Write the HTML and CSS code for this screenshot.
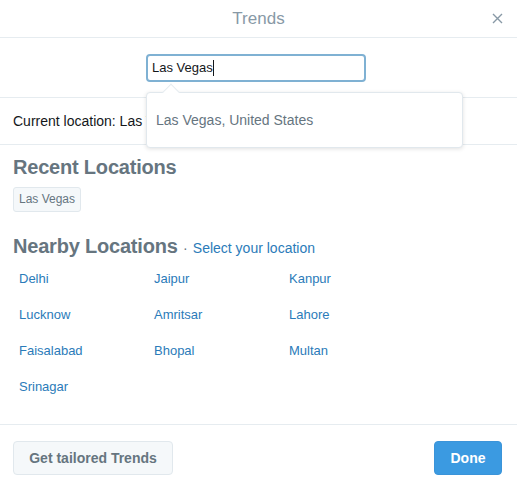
FILE: index.html
```html
<!DOCTYPE html>
<html>
<head>
<meta charset="utf-8">
<link rel="stylesheet" href="styles.css">
</head>
<body>
<div class="modal">
  <header class="header">
    <h1 class="title">Trends</h1>
    <button class="close" aria-label="Close">
      <svg width="11" height="11" viewBox="0 0 11 11"><path d="M1 1L10 10M10 1L1 10" stroke="#8899a6" stroke-width="1.4" fill="none"/></svg>
    </button>
  </header>
  <div class="search">
    <div class="search-wrap">
      <div class="input">Las Vegas<span class="cursor"></span></div>
      <div class="dropdown">
        <div class="caret"></div>
        <div class="option">Las Vegas, United States</div>
      </div>
    </div>
  </div>
  <div class="current">Current location: Las Vegas</div>
  <div class="content">
    <h2 class="section-title">Recent Locations</h2>
    <div class="chips"><span class="chip">Las Vegas</span></div>
    <h2 class="section-title nearby">Nearby Locations <span class="dot">·</span> <a class="select">Select your location</a></h2>
    <div class="grid">
      <a>Delhi</a><a>Jaipur</a><a>Kanpur</a>
      <a>Lucknow</a><a>Amritsar</a><a>Lahore</a>
      <a>Faisalabad</a><a>Bhopal</a><a>Multan</a>
      <a>Srinagar</a>
    </div>
  </div>
  <footer class="footer">
    <button class="btn btn-secondary">Get tailored Trends</button>
    <button class="btn btn-primary">Done</button>
  </footer>
</div>
</body>
</html>
```

FILE: styles.css
```css
* { box-sizing: border-box; }
html, body { margin: 0; padding: 0; background: #fff; }
body { font-family: "Liberation Sans", Arial, sans-serif; color: #14171a; }
.modal { width: 517px; height: 488px; display: flex; flex-direction: column; }
.header { height: 38px; border-bottom: 1px solid #e6ecf0; display: flex; align-items: center; justify-content: center; position: relative; }
.title { margin: 0; font-size: 17px; font-weight: normal; color: #8899a6; }
.close { position: absolute; right: 14px; top: 13px; border: 0; background: none; padding: 0; width: 11px; height: 11px; display: flex; }
.search { height: 60px; border-bottom: 1px solid #e6ecf0; display: flex; justify-content: center; padding-top: 16px; }
.search-wrap { position: relative; width: 220px; height: 28px; margin-left: -5px; }
.input { width: 220px; height: 28px; border: 2px solid #7fb1d3; border-radius: 4px; font-size: 13px; line-height: 24px; padding-left: 4px; color: #14171a; display: flex; align-items: center; }
.cursor { display: inline-block; width: 1px; height: 16px; background: #14171a; }
.dropdown { position: absolute; left: 0; top: 38px; width: 317px; height: 56px; background: #fff; border: 1px solid #e1e8ed; border-radius: 4px; box-shadow: 0 1px 4px rgba(0,0,0,0.12); z-index: 5; display: flex; align-items: center; }
.caret { position: absolute; left: 18px; top: -7px; width: 12px; height: 12px; background: #fff; border-left: 1px solid #e6ecf0; border-top: 1px solid #e6ecf0; transform: rotate(45deg); }
.option { font-size: 14px; color: #66757f; padding-left: 9px; }
.current { height: 47px; border-bottom: 1px solid #e6ecf0; display: flex; align-items: center; padding-left: 13px; font-size: 14px; color: #14171a; white-space: nowrap; overflow: hidden; }
.content { flex: 1; padding: 9px 13px 0; border-bottom: 1px solid #e6ecf0; }
.section-title { margin: 0; font-size: 20px; font-weight: bold; color: #66757f; line-height: 26px; letter-spacing: -0.2px; }
.chips { margin-top: 7px; height: 26px; }
.chip { display: inline-block; height: 25px; line-height: 23px; padding: 0 5px; font-size: 12px; color: #66757f; background: #f5f8fa; border: 1px solid #e1e8ed; border-radius: 3px; }
.nearby { margin-top: 20px; }
.dot { font-size: 14px; font-weight: normal; color: #66757f; }
.select { font-size: 14px; font-weight: normal; color: #2b7bb9; letter-spacing: 0; }
.grid { display: grid; grid-template-columns: 135px 135px 135px; grid-auto-rows: 36px; padding-left: 6px; margin-top: 10px; }
.grid a { font-size: 13px; color: #2b7bb9; line-height: 16px; }
.footer { height: 63px; display: flex; justify-content: space-between; align-items: center; padding: 2px 15px 0 13px; }
.btn { height: 34px; border-radius: 4px; font-family: inherit; font-size: 14px; font-weight: bold; padding: 0; white-space: nowrap; }
.btn-secondary { width: 160px; background: #f5f8fa; border: 1px solid #e1e8ed; color: #66757f; }
.btn-primary { width: 68px; background: #3b9ae1; border: 1px solid #3b94d9; color: #fff; }
```
